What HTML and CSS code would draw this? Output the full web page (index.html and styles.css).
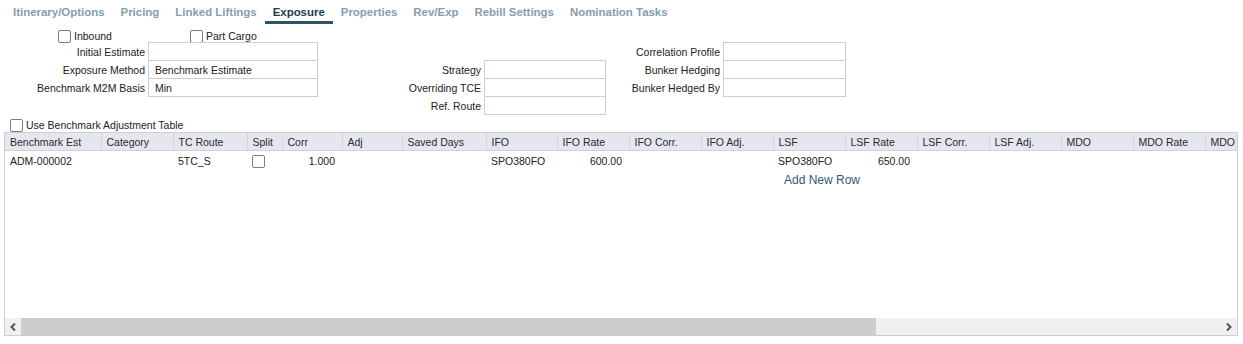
FILE: index.html
```html
<!DOCTYPE html>
<html lang="en">
<head>
    <meta charset="UTF-8">
    <title>Exposure</title>
    <link rel="stylesheet" href="styles.css">
</head>
<body>

<!-- tab strip -->
<div class="tabs">
    <span class="tab">Itinerary/Options</span>
    <span class="tab">Pricing</span>
    <span class="tab">Linked Liftings</span>
    <span class="tab active">Exposure</span>
    <span class="tab">Properties</span>
    <span class="tab">Rev/Exp</span>
    <span class="tab">Rebill Settings</span>
    <span class="tab">Nomination Tasks</span>
</div>

<!-- header checkboxes -->
<div class="checks">
    <label class="chk chk_inbound"><span class="box"></span>Inbound</label>
    <label class="chk"><span class="box"></span>Part Cargo</label>
</div>

<!-- exposure fields -->
<div class="form">
    <span class="lbl">Initial Estimate</span><span class="fld"></span>
    <span class="lbl"></span><span class="blank"></span>
    <span class="lbl">Correlation Profile</span><span class="fld"></span>

    <span class="lbl">Exposure Method</span><span class="fld">Benchmark Estimate</span>
    <span class="lbl">Strategy</span><span class="fld"></span>
    <span class="lbl">Bunker Hedging</span><span class="fld"></span>

    <span class="lbl">Benchmark M2M Basis</span><span class="fld">Min</span>
    <span class="lbl">Overriding TCE</span><span class="fld"></span>
    <span class="lbl">Bunker Hedged By</span><span class="fld"></span>

    <span class="lbl"></span><span class="blank"></span>
    <span class="lbl">Ref. Route</span><span class="fld"></span>
    <span class="lbl"></span><span class="blank"></span>
</div>

<label class="chk chk_table"><span class="box"></span>Use Benchmark Adjustment Table</label>

<!-- benchmark grid -->
<div class="grid">
    <div class="grid_body">
        <table>
            <colgroup>
                <col style="width:96px"><col style="width:72px"><col style="width:74px"><col style="width:35px">
                <col style="width:60px"><col style="width:60px"><col style="width:84px"><col style="width:71px">
                <col style="width:72px"><col style="width:72px"><col style="width:72px"><col style="width:72px">
                <col style="width:72px"><col style="width:72px"><col style="width:72px"><col style="width:72px">
                <col style="width:72px"><col style="width:72px"><col style="width:72px">
            </colgroup>
            <thead>
            <tr>
                <th>Benchmark Est</th><th>Category</th><th>TC Route</th><th>Split</th><th>Corr</th>
                <th>Adj</th><th>Saved Days</th><th>IFO</th><th>IFO Rate</th><th>IFO Corr.</th>
                <th>IFO Adj.</th><th>LSF</th><th>LSF Rate</th><th>LSF Corr.</th><th>LSF Adj.</th>
                <th>MDO</th><th>MDO Rate</th><th>MDO Corr.</th><th>MDO Adj.</th>
            </tr>
            </thead>
            <tbody>
            <tr>
                <td>ADM-000002</td><td></td><td>5TC_S</td><td class="c_split"><span class="box"></span></td>
                <td class="num">1.000</td><td></td><td></td><td>SPO380FO</td><td class="num">600.00</td>
                <td></td><td></td><td>SPO380FO</td><td class="num">650.00</td><td></td><td></td>
                <td></td><td></td><td></td><td></td>
            </tr>
            </tbody>
        </table>
        <div class="add_row">Add New Row</div>
    </div>

    <!-- horizontal scrollbar -->
    <div class="hscroll">
        <span class="arrow">
            <svg width="8" height="10" viewBox="0 0 8 10"><polyline points="6,1.5 2.5,5 6,8.5" fill="none" stroke="#555" stroke-width="2"/></svg>
        </span>
        <span class="track"><span class="thumb"></span></span>
        <span class="arrow">
            <svg width="8" height="10" viewBox="0 0 8 10"><polyline points="2,1.5 5.5,5 2,8.5" fill="none" stroke="#555" stroke-width="2"/></svg>
        </span>
    </div>
</div>

</body>
</html>
```

FILE: styles.css
```css
body {
    margin: 0;
    font-family: "Liberation Sans", Arial, sans-serif;
    font-size: 10.5px;
    color: #222;
    background: #fff;
}

/* tabs */
.tabs {
    display: flex;
    padding-left: 5px;
    height: 24px;
}
.tab {
    padding: 6px 8px 0;
    font-weight: bold;
    font-size: 11.45px;
    color: #849eae;
    box-sizing: border-box;
    height: 24px;
}
.tab.active {
    color: #1f3a4a;
    border-bottom: 3px solid #2f5266;
}

/* checkboxes */
.chk {
    display: flex;
    align-items: center;
    height: 13px;
    line-height: 13px;
}
.box {
    display: inline-block;
    width: 13px;
    height: 13px;
    box-sizing: border-box;
    border: 1px solid #7b7b80;
    border-radius: 2px;
    background: #fff;
    margin-right: 3px;
}
.checks {
    display: flex;
    padding: 6px 0 0 58px;
    height: 12px;
}
.chk_inbound {
    width: 132px;
}

/* form */
.form {
    display: grid;
    grid-template-columns: 145px 173px 163px 125px 114px 126px;
    grid-auto-rows: 18px;
}
.lbl {
    text-align: right;
    line-height: 20px;
    white-space: nowrap;
}
.fld {
    margin-left: 3px;
    height: 19px;
    box-sizing: border-box;
    border: 1px solid #c9ced8;
    padding-left: 6px;
    line-height: 18px;
    white-space: nowrap;
}
.chk_table {
    margin: 5px 0 0 10px;
}

/* grid */
.grid {
    margin-left: 4px;
    width: 1234px;
    height: 204px;
    box-sizing: border-box;
    border: 1px solid #c9ced8;
    display: flex;
    flex-direction: column;
}
.grid_body {
    flex: 1;
    overflow: hidden;
}
table {
    border-collapse: collapse;
    table-layout: fixed;
    width: 1344px;
}
th {
    background: #e6e7ee;
    font-weight: normal;
    text-align: left;
    height: 17px;
    padding: 0 0 0 5px;
    border-right: 1px solid #d3d6de;
    border-bottom: 1px solid #cfd2da;
    color: #2a2a2a;
    white-space: nowrap;
    overflow: hidden;
}
td {
    height: 20px;
    padding: 0 0 0 5px;
    white-space: nowrap;
    overflow: hidden;
}
td.num {
    text-align: right;
    padding-right: 7px;
}
td.c_split .box {
    display: block;
    margin-top: 1px;
}
.add_row {
    padding: 2px 0 0 779px;
    color: #2f5a73;
    font-size: 12px;
}

/* scrollbar */
.hscroll {
    display: flex;
    height: 17px;
    background: #f0f0f0;
}
.arrow {
    width: 16px;
    display: flex;
    align-items: center;
    justify-content: center;
}
.track {
    flex: 1;
    display: flex;
}
.thumb {
    width: 855px;
    background: #cdcdcd;
}
```
